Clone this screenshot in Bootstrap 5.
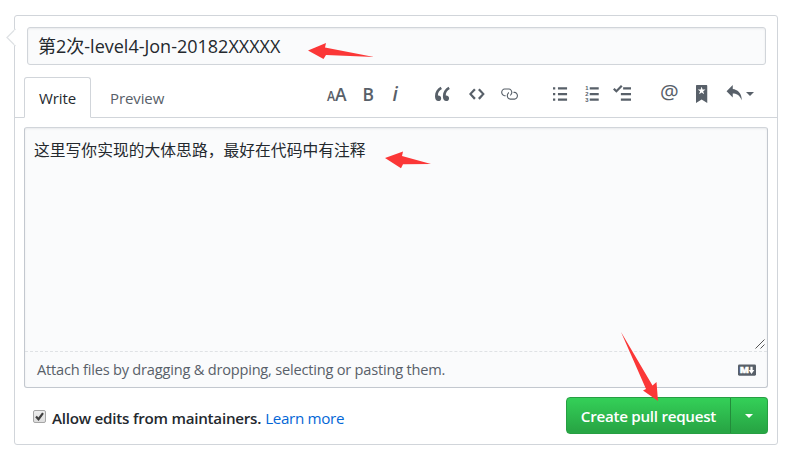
<!DOCTYPE html>
<html lang="zh-CN">
<head>
<meta charset="utf-8">
<title>Open a pull request</title>
<link href="https://cdn.jsdelivr.net/npm/bootstrap@5.3.0/dist/css/bootstrap.min.css" rel="stylesheet">
<style>
body{font-family:"Open Sans","Noto Sans CJK SC",sans-serif;font-size:15.75px;line-height:24px;color:#24292e;background:#fff;height:459px;overflow:hidden}
.pr-page{padding:15px 13px 0 14px}
.pr-box{height:430px;border:1px solid #d1d5da;border-radius:3px}
.pr-notch{left:-9px;top:11px}
.pr-title{margin:11px 11px 0 12px;height:38px;padding:0 11px 0 10px;border:1px solid #d1d5da;border-radius:3px;background:#fafbfc;box-shadow:inset 0 1px 2px rgba(27,31,35,.075);font-size:18px;line-height:37px;white-space:nowrap}
.pr-tabs{height:41px;margin-top:12px;padding-left:9px;border-bottom:1px solid #d1d5da}
.pr-tabs .nav-link{height:41px;line-height:24px;padding:8px 14px 0;border:1px solid transparent;border-radius:3px 3px 0 0;color:#586069;font-size:15px;letter-spacing:-.1px}
.pr-tabs .nav-link.active{width:67px;color:#24292e;background:#fff;border-color:#d1d5da #d1d5da #fff}
.pr-tools{display:grid;grid-template-columns:35.5px 29px 43px 34.5px 31px 52.7px 31.8px 28.5px 48px 34.7px 29.8px 20.5px 31px;margin-top:8px;color:#586069;height:18px}
.pr-tools svg{height:18px;display:block;fill:currentColor;overflow:visible}
.pr-caret{width:0;border:4.5px solid transparent;border-top-color:currentColor;border-bottom:0}
.pr-editor{margin:9px 9px 0;height:261px;border:1px solid #c3c8cf;border-top-color:#d1d5da;border-radius:3px;background:#fafbfc;box-shadow:inset 0 1px 2px rgba(27,31,35,.075)}
.pr-text{height:223px;padding:10px 9px;letter-spacing:.04px}
.pr-grip{right:2px;bottom:2px}
.pr-attach{height:36px;border-top:1px dashed #dfe2e5;padding:0 11px 0 12px;color:#586069;font-size:14.6px;letter-spacing:-.21px}
.pr-attach span{margin-top:-2px}
.pr-foot{padding:9px 9px 0 18px;font-size:15.2px}
.pr-check{width:13px;height:13px;margin:-3px 6px 0 0}
.pr-foot b{font-weight:600;letter-spacing:-.25px}
.pr-foot a{color:#0366d6;letter-spacing:-.33px}
.pr-allow{padding-top:9px}
.pr-go .btn{height:37px;padding:0 14px;font-size:15.2px;letter-spacing:-.28px;font-weight:600;color:#fff;border:1px solid #279f43;border-radius:4px;background:linear-gradient(#34d058,#28a745 90%);line-height:36px}
.pr-go .btn:last-child{width:38px;padding:0;border-left-color:#238b3b}
.pr-arrows{left:0;top:0;pointer-events:none;z-index:5}
</style>
<script src="https://cdn.jsdelivr.net/npm/bootstrap@5.3.0/dist/js/bootstrap.bundle.min.js"></script>
</head>
<body>
<main class="pr-page">
<div class="pr-box position-relative">
<svg class="pr-notch position-absolute" width="10" height="20" viewBox="0 0 10 20"><path d="M9.500 2L1 10.500L9.500 19" fill="#fff" stroke="#dfe2e5" stroke-width="1.300"/><path d="M9 3v15" stroke="#fff"/></svg>
<div class="pr-title">第2次-level4-Jon-20182XXXXX</div>
<div class="pr-tabs d-flex">
<a class="nav-link active" href="#">Write</a>
<a class="nav-link ms-1" href="#">Preview</a>
<div class="pr-tools ms-auto">
<svg width="20.250" viewBox="0 0 18 16" font-family="Open Sans" font-weight="600"><text x="-.1" y="14" font-size="13" textLength="7.200" lengthAdjust="spacingAndGlyphs">A</text><text x="7.100" y="14" font-size="16.500" textLength="10.300" lengthAdjust="spacingAndGlyphs">A</text></svg>
<svg width="11.250" viewBox="0 0 10 16"><text x="-.4" y="14" font-family="Open Sans" font-weight="600" font-size="16.500" textLength="10.200" lengthAdjust="spacingAndGlyphs">B</text></svg>
<svg width="6.750" viewBox="0 0 6 16"><text x=".5" y="14" font-family="Open Sans" font-style="italic" font-weight="600" font-size="17">i</text></svg>
<svg width="15.750" viewBox="0 0 14 16"><path d="M6.160 3.500C3.730 5.060 2.550 6.670 2.550 9.360c.16-.05.3-.05.44-.05 1.270 0 2.500.86 2.500 2.410 0 1.610-1.030 2.610-2.500 2.610-1.900 0-2.990-1.520-2.990-4.250 0-3.800 1.750-6.530 5.020-8.420L6.160 3.500zm7 0c-2.430 1.560-3.610 3.170-3.610 5.860.16-.05.3-.05.44-.05 1.270 0 2.500.86 2.500 2.410 0 1.610-1.030 2.610-2.500 2.610-1.890 0-2.980-1.520-2.980-4.250 0-3.800 1.750-6.530 5.020-8.420l1.140 1.840z"/></svg>
<svg width="15.750" viewBox="0 0 14 16"><path d="M9.500 3L8 4.500 11.500 8 8 11.500 9.500 13 14 8 9.500 3zm-5 0L0 8l4.500 5L6 11.500 2.500 8 6 4.500 4.500 3z"/></svg>
<svg width="18" viewBox="0 0 16 16"><path d="M4 9h1v1H4c-1.500 0-3-1.690-3-3.500S2.550 3 4 3h4c1.450 0 3 1.690 3 3.500 0 1.410-.91 2.720-2 3.250V8.590c.58-.45 1-1.270 1-2.090C10 5.220 8.980 4 8 4H4c-.98 0-2 1.220-2 2.500S3 9 4 9zm9-3h-1v1h1c1 0 2 1.220 2 2.500S13.980 12 13 12H9c-.98 0-2-1.220-2-2.500 0-.83.42-1.640 1-2.090V6.250c-1.090.53-2 1.840-2 3.250C6 11.310 7.550 13 9 13h4c1.450 0 3-1.690 3-3.500S14.500 6 13 6z"/></svg>
<svg width="13.500" viewBox="0 0 12 16"><path d="M0 2h2v2H0zM4.400 2H12.500v2H4.400zM0 7h2v2H0zM4.400 7H12.500v2H4.400zM0 12h2v2H0zM4.400 12H12.500v2H4.400z"/></svg>
<svg width="13.500" viewBox="0 0 12 16"><path d="M4.200 2h8v2h-8zM4.200 7h8v2h-8zM4.200 12h8v2h-8z"/><g font-family="Liberation Sans" font-weight="700" font-size="5.200"><text x=".2" y="4.700">1</text><text x=".2" y="10">2</text><text x=".2" y="15.300">3</text></g></svg>
<svg width="18" viewBox="0 0 16 16"><path d="M9 2h7v2H9zM7 7h9v2H7zM7 12h9v2H7zM0 3.910l1.410-1.300L3 4.200 7.090 0 8.500 1.410 3 6.910z"/></svg>
<svg width="15.750" viewBox="0 0 14 16"><text x="-1" y="12.800" font-family="Open Sans" font-size="17.500" textLength="16.600" lengthAdjust="spacingAndGlyphs">@</text></svg>
<svg width="11.250" viewBox="0 0 10 16"><path d="M9 0H1C.27 0 0 .27 0 1v15l5-3.090L10 16V1c0-.73-.27-1-1-1zm-.78 4.250L6.360 5.610l.72 2.160c.06.22-.02.28-.2.17L5 6.600 3.120 7.940c-.19.11-.25.05-.2-.17l.72-2.160-1.860-1.360c-.17-.16-.14-.23.09-.23l2.300-.03.7-2.160h.25l.7 2.160 2.300.03c.23 0 .27.08.09.23z"/></svg>
<svg width="15.750" viewBox="0 0 14 16"><path d="M6 3.500c3.920.44 8 3.125 8 10-2.312-5.062-4.750-6-8-6V11L.5 5.500 6 0v3.500z"/></svg>
<span class="pr-caret align-self-center"></span>
</div>
</div>
<div class="pr-editor">
<div class="pr-text position-relative">这里写你实现的大体思路，最好在代码中有注释
<svg class="pr-grip position-absolute" width="10" height="10" viewBox="0 0 10 10"><path d="M.5 9.500l9-9M5.500 9.500l4-4" stroke="#555"/></svg></div>
<div class="pr-attach d-flex align-items-center justify-content-between"><span>Attach files by dragging &amp; dropping, selecting or pasting them.</span>
<svg width="18" height="18" viewBox="0 0 16 16"><rect y="3" width="16" height="10" rx="1.150" fill="#586069"/><text x="1.500" y="11" font-family="Open Sans" font-weight="800" font-size="8.400" fill="#fff" stroke="#fff" stroke-width=".5" textLength="8" lengthAdjust="spacingAndGlyphs">M</text><path d="M11.990 11.500L9.500 8H11V5h2v3h1.500z" fill="#fff"/></svg></div>
</div>
<div class="pr-foot d-flex align-items-start justify-content-between">
<div class="pr-allow d-flex align-items-center"><svg class="pr-check" viewBox="0 0 13 13"><defs><linearGradient id="cg" x2="0" y2="1"><stop stop-color="#eee"/><stop offset="1" stop-color="#ddd"/></linearGradient></defs><rect x=".5" y=".5" width="12" height="12" rx="1.500" fill="url(#cg)" stroke="#a6a6a6"/><path d="M3 6.500l2.500 2.700L10 3.200" fill="none" stroke="#3f3f3f" stroke-width="2.200"/></svg><b>Allow edits from maintainers.</b><a class="text-decoration-none ms-1" href="#">Learn more</a></div>
<div class="pr-go btn-group"><button class="btn" type="button">Create pull request</button><button class="btn d-flex align-items-center justify-content-center" type="button" aria-label="More options"><span class="pr-caret"></span></button></div>
</div>
</div>
</main>
<svg class="pr-arrows position-absolute" width="791" height="459" fill="#fb3737"><path d="M308 50.500L326 43l-1 4.500L374 57l-48-2-2.500 4z"/><path d="M385 158l18-6.500-1 4.500 29 8-28 .3-2 4z"/><path d="M621 332l31.500 53.500 4-3.500 1.500 19-15-10.500 3-1.500z"/></svg>
</body>
</html>
